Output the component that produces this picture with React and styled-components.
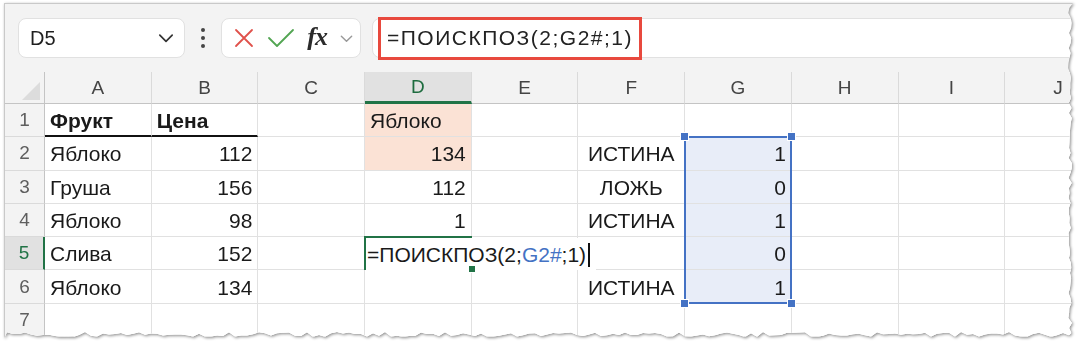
import styled, { createGlobalStyle, css } from 'styled-components';

const GlobalStyle = createGlobalStyle`
  body {
    margin: 0;
    background: #fff;
    font-family: 'Liberation Sans', Arial, sans-serif;
  }
`;

// ragged right/bottom edge of the cut-out screenshot
const tornEdge = (() => {
  let seed = 11;
  const rnd = () => {
    seed = (seed * 9301 + 49297) % 233280;
    return seed / 233280;
  };
  const W = 1069;
  const H = 335;
  const pts = ['0px 0px', `${W}px 0px`];
  for (let y = 5; y < H - 4; y += 5) pts.push(`${(W - 1 - rnd() * 4).toFixed(1)}px ${y}px`);
  for (let x = W - 4; x > 0; x -= 6) pts.push(`${x}px ${(H - 1 - rnd() * 5).toFixed(1)}px`);
  pts.push(`0px ${H}px`);
  return `polygon(${pts.join(', ')})`;
})();

const Page = styled.div`
  padding: 3px 0 0 4px;
`;

const Shadow = styled.div`
  display: inline-block;
  filter: drop-shadow(1px 1px 1.5px rgba(0, 0, 0, 0.45));
`;

const Frame = styled.div`
  width: 1069px;
  height: 335px;
  box-sizing: border-box;
  background: #f3f3f3;
  border-top: 1px solid #c9c9c9;
  border-left: 1px solid #c9c9c9;
  clip-path: ${tornEdge};
  overflow: hidden;
`;

const Toolbar = styled.div`
  display: flex;
  align-items: center;
  height: 68px;
  padding-left: 13px;
`;

const Box = styled.div`
  height: 40px;
  box-sizing: border-box;
  background: #fff;
  border: 1px solid #e1e1e1;
  border-radius: 8px;
  display: flex;
  align-items: center;
`;

const NameBox = styled(Box)`
  width: 167px;
  justify-content: space-between;
  padding: 0 9px 0 11px;
  font-size: 20px;
  color: #1f1f1f;
`;

const Dots = styled.div`
  width: 36px;
  display: flex;
  flex-direction: column;
  align-items: center;
  gap: 4px;
  span {
    width: 4px;
    height: 4px;
    border-radius: 50%;
    background: #454545;
  }
`;

const FxBox = styled(Box)`
  width: 140px;
  padding: 0 6px 0 11px;
  justify-content: space-between;
`;

const Fx = styled.span`
  font-family: 'Liberation Serif', 'Times New Roman', serif;
  font-style: italic;
  font-weight: bold;
  font-size: 26px;
  color: #2b2b2b;
  letter-spacing: -1px;
  margin-top: -3px;
`;

const FormulaBox = styled(Box)`
  flex: 1;
  margin-left: 11px;
  margin-right: -12px;
  padding-left: 5px;
`;

const FormulaText = styled.div`
  height: 43px;
  box-sizing: border-box;
  border: 3px solid #e8493e;
  padding: 0 6px;
  display: flex;
  align-items: center;
  font-size: 21px;
  letter-spacing: 1.5px;
  color: #222;
`;

const Grid = styled.div`
  display: grid;
  grid-template-columns: 40px repeat(10, 106.7px);
  grid-template-rows: 32px repeat(7, 33.3px);
  background: #fff;
`;

const placed = css`
  grid-row: ${(p) => p.$row};
  grid-column: ${(p) => p.$col};
`;

const Corner = styled.div`
  grid-row: 1;
  grid-column: 1;
  background: #f3f3f3;
  border-right: 1px solid #c4c4c4;
  border-bottom: 1px solid #c4c4c4;
  position: relative;
  &::after {
    content: '';
    position: absolute;
    right: 4px;
    bottom: 3px;
    width: 18px;
    height: 18px;
    background: #dcdcdc;
    clip-path: polygon(100% 0, 100% 100%, 0 100%);
  }
`;

const ColHead = styled.div`
  ${placed}
  background: #f3f3f3;
  border-right: 1px solid #dadada;
  border-bottom: 1px solid #c4c4c4;
  display: flex;
  align-items: center;
  justify-content: center;
  font-size: 19px;
  color: #444;
  ${(p) =>
    p.$active &&
    css`
      background: #e1e1e1;
      color: #1d6b3e;
      border-bottom: 3px solid #217346;
    `}
`;

const RowHead = styled.div`
  ${placed}
  background: #f3f3f3;
  border-right: 1px solid #c4c4c4;
  border-bottom: 1px solid #dadada;
  display: flex;
  align-items: center;
  justify-content: center;
  font-size: 19px;
  color: #5e5e5e;
  ${(p) =>
    p.$active &&
    css`
      background: #e1e1e1;
      color: #217346;
      border-right: 2px solid #217346;
    `}
`;

const Cell = styled.div`
  ${placed}
  border-right: 1px solid #e1e1e1;
  border-bottom: ${(p) => (p.$underline ? '2px solid #111' : '1px solid #e1e1e1')};
  background: ${(p) => p.$fill || '#fff'};
  display: flex;
  align-items: center;
  justify-content: ${(p) => p.$align || 'flex-start'};
  padding: 2px 5px 0;
  font-size: 21px;
  font-weight: ${(p) => (p.$bold ? 'bold' : 'normal')};
  color: #1a1a1a;
  white-space: nowrap;
  overflow: hidden;
`;

const Selection = styled.div`
  grid-column: 8;
  grid-row: 3 / 8;
  margin: -1px 0 0 -1px;
  border: 2px solid #4472c4;
  position: relative;
  z-index: 2;
  pointer-events: none;
`;

const Handle = styled.span`
  position: absolute;
  width: 7px;
  height: 7px;
  background: #4472c4;
  border: 1px solid #fff;
  ${(p) => (p.$top ? 'top: -6px;' : 'bottom: -6px;')}
  ${(p) => (p.$left ? 'left: -6px;' : 'right: -6px;')}
`;

const EditCell = styled.div`
  grid-column: 5;
  grid-row: 6;
  margin: -1px 0 0 -1px;
  border: 2px solid #217346;
  border-right: none;
  position: relative;
  z-index: 3;
`;

const EditText = styled.div`
  height: 100%;
  width: max-content;
  background: #fff;
  display: flex;
  align-items: center;
  padding: 2px 6px 0 1px;
  font-size: 21px;
  color: #1a1a1a;
  &::after {
    content: '';
    width: 2px;
    height: 24px;
    margin-left: 2px;
    background: #111;
  }
`;

const Ref = styled.span`
  color: #4472c4;
`;

const FillHandle = styled.span`
  position: absolute;
  right: -4px;
  bottom: -5px;
  width: 6px;
  height: 6px;
  background: #217346;
  border: 1px solid #fff;
`;

const Chevron = ({ size = 16, color = '#333' }) => (
  <svg width={size} height={size} viewBox="0 0 16 16" fill="none">
    <path d="M2.5 5.5 L8 11 L13.5 5.5" stroke={color} strokeWidth="1.5" strokeLinecap="round" strokeLinejoin="round" />
  </svg>
);

const CancelIcon = () => (
  <svg width="22" height="22" viewBox="0 0 22 22" fill="none">
    <path d="M3 3 L19 19 M19 3 L3 19" stroke="#e0514b" strokeWidth="1.8" strokeLinecap="round" />
  </svg>
);

const EnterIcon = () => (
  <svg width="28" height="22" viewBox="0 0 28 22" fill="none">
    <path d="M2 11 L10 19 L26 3" stroke="#52a552" strokeWidth="1.8" strokeLinecap="round" strokeLinejoin="round" />
  </svg>
);

const cols = ['A', 'B', 'C', 'D', 'E', 'F', 'G', 'H', 'I', 'J'];
const PEACH = '#fbe2d5';
const BLUE = '#e8edf8';

// per row: cells A..J, each { v, align, bold, fill, underline }
const R = 'flex-end';
const C = 'center';
const rows = [
  { A: { v: 'Фрукт', bold: true, underline: true }, B: { v: 'Цена', bold: true, underline: true }, D: { v: 'Яблоко', fill: PEACH } },
  { A: { v: 'Яблоко' }, B: { v: 112, align: R }, D: { v: 134, align: R, fill: PEACH }, F: { v: 'ИСТИНА', align: C }, G: { v: 1, align: R, fill: BLUE } },
  { A: { v: 'Груша' }, B: { v: 156, align: R }, D: { v: 112, align: R }, F: { v: 'ЛОЖЬ', align: C }, G: { v: 0, align: R, fill: BLUE } },
  { A: { v: 'Яблоко' }, B: { v: 98, align: R }, D: { v: 1, align: R }, F: { v: 'ИСТИНА', align: C }, G: { v: 1, align: R, fill: BLUE } },
  { A: { v: 'Слива' }, B: { v: 152, align: R }, G: { v: 0, align: R, fill: BLUE } },
  { A: { v: 'Яблоко' }, B: { v: 134, align: R }, F: { v: 'ИСТИНА', align: C }, G: { v: 1, align: R, fill: BLUE } },
  {},
];

const App = () => {
  return (
    <Page>
      <GlobalStyle />
      <Shadow>
        <Frame>
          <Toolbar>
            <NameBox>
              D5
              <Chevron size={18} color="#333" />
            </NameBox>
            <Dots>
              <span />
              <span />
              <span />
            </Dots>
            <FxBox>
              <CancelIcon />
              <EnterIcon />
              <Fx>fx</Fx>
              <Chevron size={15} color="#999" />
            </FxBox>
            <FormulaBox>
              <FormulaText>=ПОИСКПОЗ(2;G2#;1)</FormulaText>
            </FormulaBox>
          </Toolbar>

          <Grid>
            <Corner />
            {cols.map((c, j) => (
              <ColHead key={c} $row={1} $col={j + 2} $active={c === 'D'}>
                {c}
              </ColHead>
            ))}
            {rows.map((row, i) => [
              <RowHead key={`r${i}`} $row={i + 2} $col={1} $active={i === 4}>
                {i + 1}
              </RowHead>,
              ...cols.map((c, j) => {
                const cell = row[c] || {};
                return (
                  <Cell
                    key={`${c}${i}`}
                    $row={i + 2}
                    $col={j + 2}
                    $align={cell.align}
                    $bold={cell.bold}
                    $fill={cell.fill}
                    $underline={cell.underline}
                  >
                    {cell.v}
                  </Cell>
                );
              }),
            ])}
            <Selection>
              <Handle $top $left />
              <Handle $top />
              <Handle $left />
              <Handle />
            </Selection>
            <EditCell>
              <EditText>
                =ПОИСКПОЗ(2;<Ref>G2#</Ref>;1)
              </EditText>
              <FillHandle />
            </EditCell>
          </Grid>
        </Frame>
      </Shadow>
    </Page>
  );
};

export default App;
